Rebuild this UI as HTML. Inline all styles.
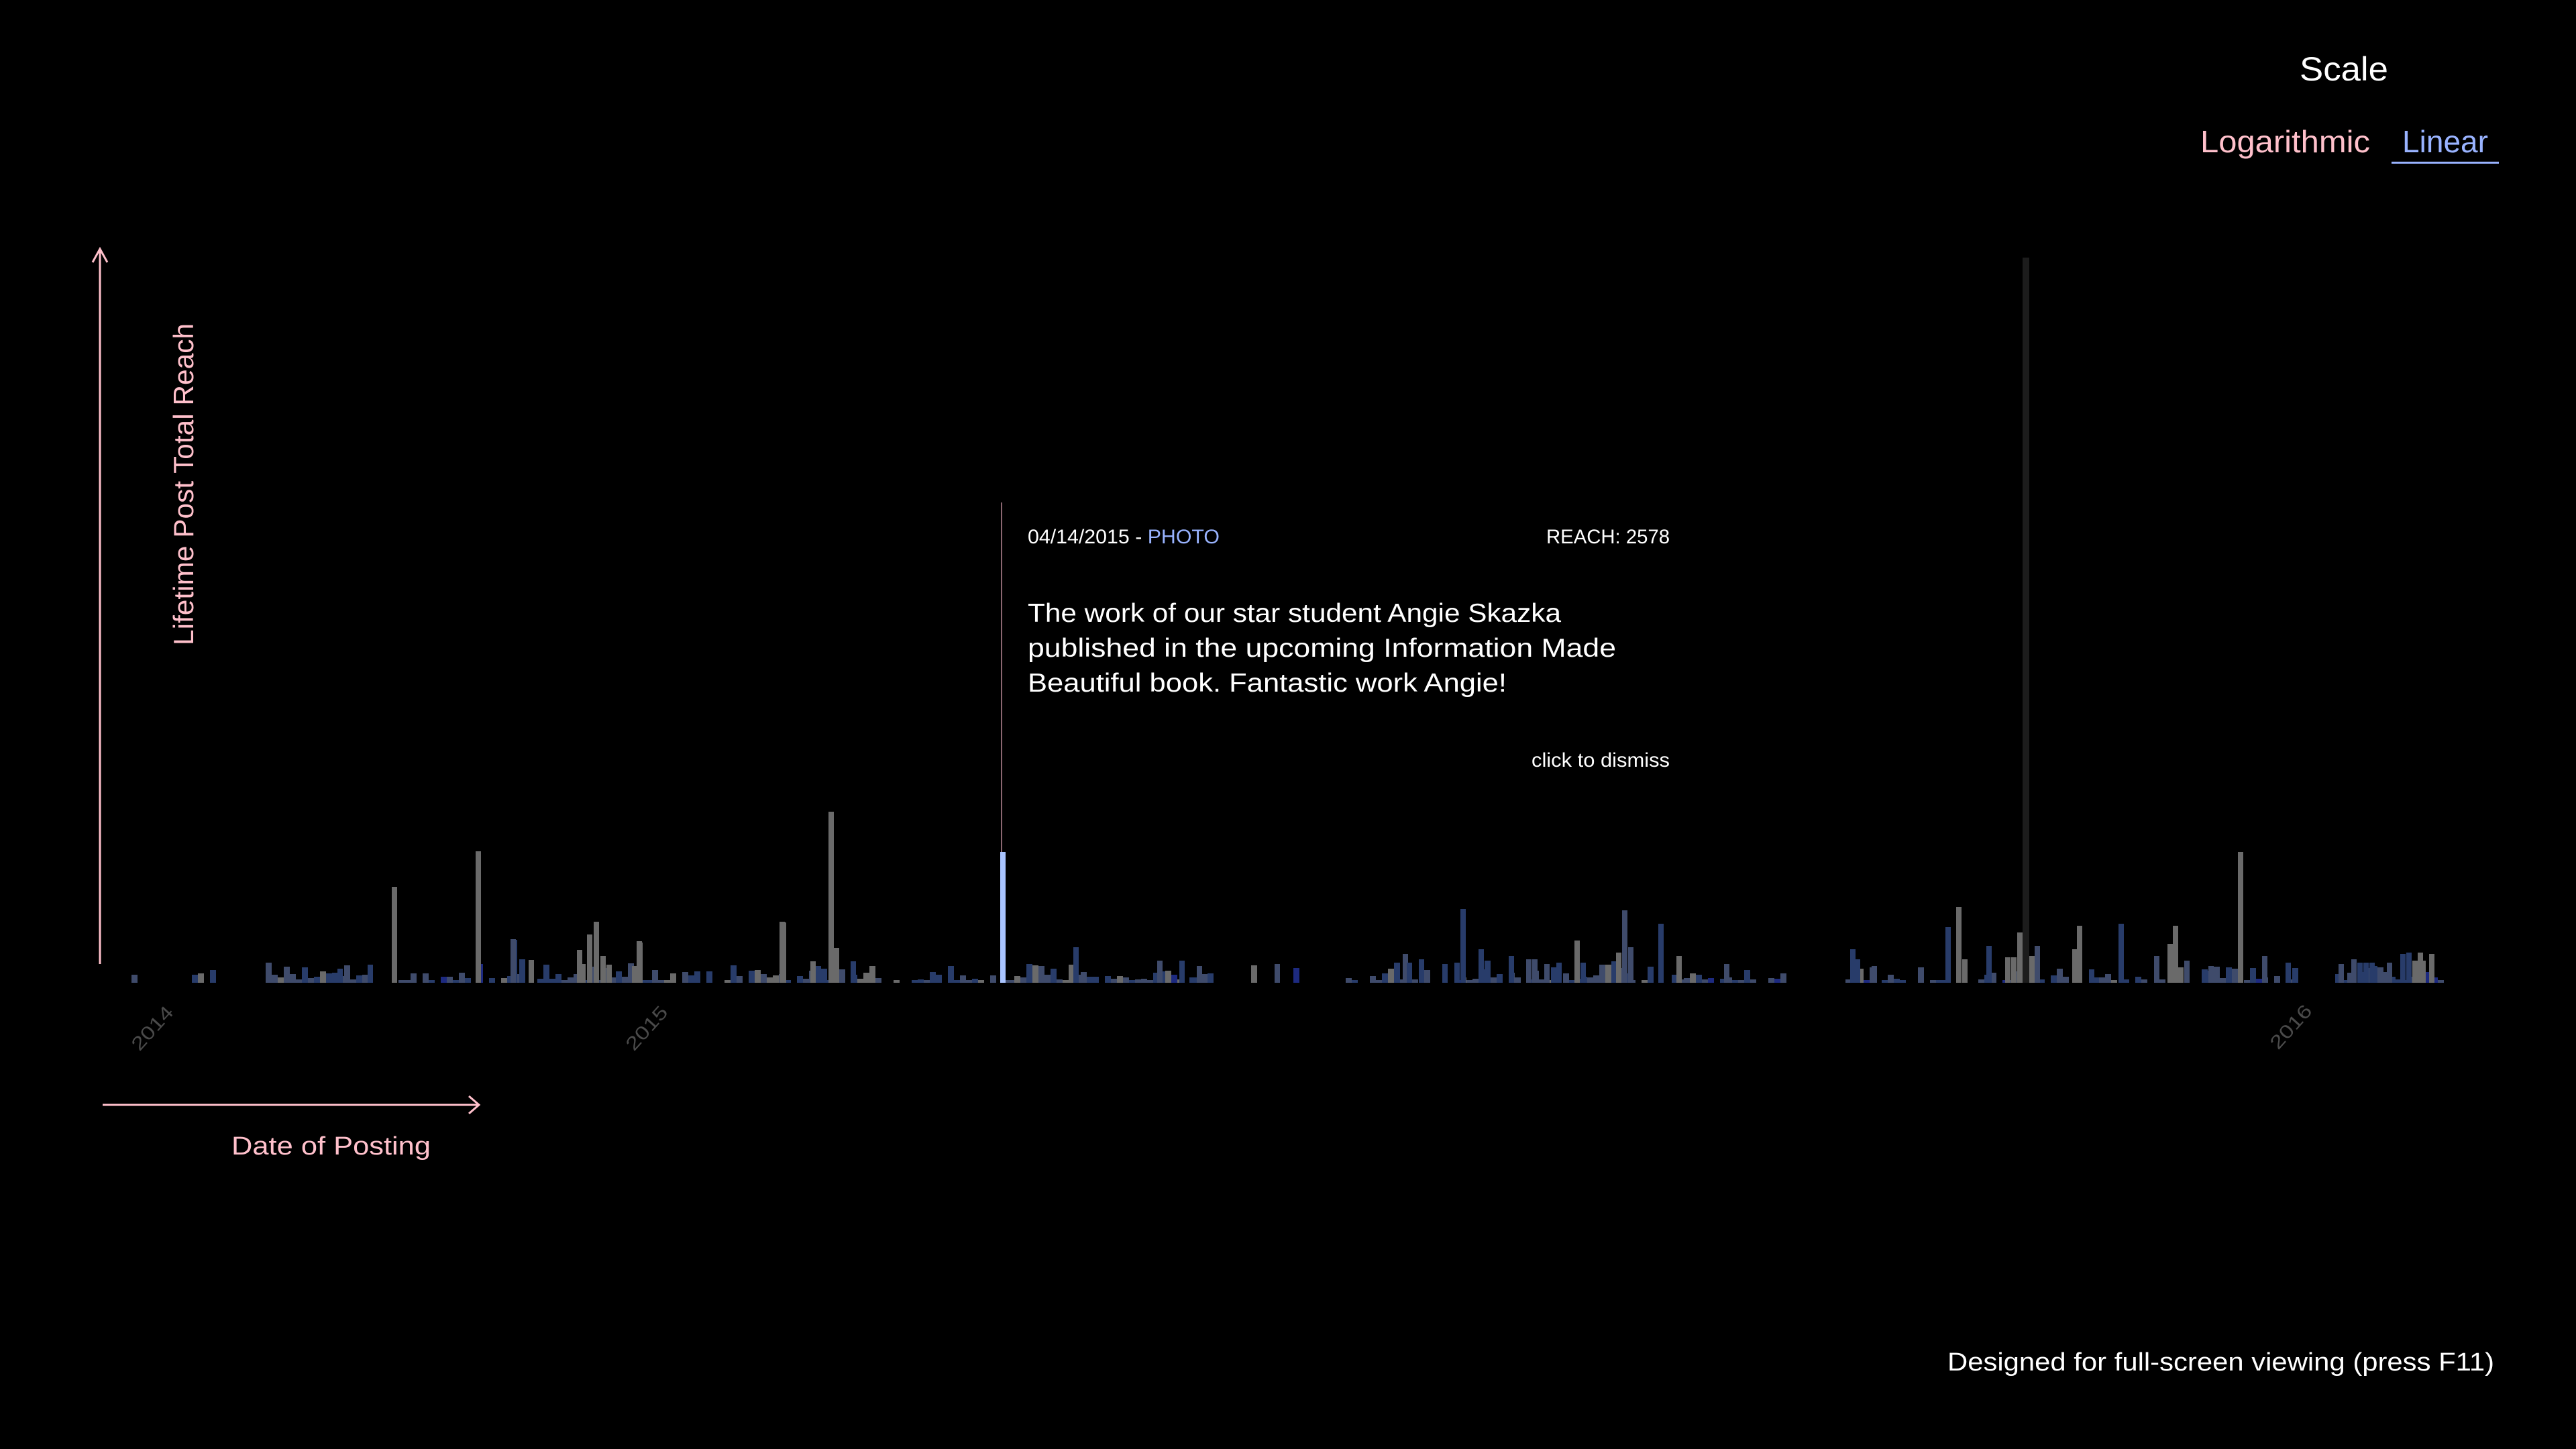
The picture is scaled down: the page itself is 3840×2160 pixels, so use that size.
<!DOCTYPE html>
<html><head><meta charset="utf-8">
<style>
html,body{margin:0;padding:0;background:#000;width:3840px;height:2160px;overflow:hidden}
svg{display:block}
text{font-family:"Liberation Sans",sans-serif}
</style></head>
<body>
<svg id="s" width="3840" height="2160" viewBox="0 0 3840 2160" xmlns="http://www.w3.org/2000/svg">
<rect width="3840" height="2160" fill="#000"/>
<g id="bars"></g>
<rect x="3015" y="384" width="10" height="1081" fill="#1c1c1c"/>
<rect x="1492" y="749" width="2" height="716" fill="#8a6670"/>
<rect x="1491" y="1270" width="8" height="195" fill="#a9c4ff"/>

<line x1="149" y1="372" x2="149" y2="1437" stroke="#ffc0cb" stroke-width="3"/>
<polyline points="138,391 149,371 160,391" fill="none" stroke="#ffc0cb" stroke-width="3"/>
<line x1="153" y1="1647" x2="713" y2="1647" stroke="#ffc0cb" stroke-width="3"/>
<polyline points="699,1634 714,1647 699,1660" fill="none" stroke="#ffc0cb" stroke-width="3"/>

<text x="0" y="0" transform="translate(288,962) rotate(-90)" font-size="42" fill="#ffc0cb" textLength="480" lengthAdjust="spacingAndGlyphs">Lifetime Post Total Reach</text>
<text x="345" y="1721" font-size="38" fill="#ffc0cb" textLength="297" lengthAdjust="spacingAndGlyphs">Date of Posting</text>

<text transform="translate(208,1568) rotate(-48)" font-size="28" fill="#4a4a4a" textLength="78" lengthAdjust="spacingAndGlyphs">2014</text>
<text transform="translate(945,1568) rotate(-48)" font-size="28" fill="#4a4a4a" textLength="78" lengthAdjust="spacingAndGlyphs">2015</text>
<text transform="translate(3396,1566) rotate(-48)" font-size="28" fill="#4a4a4a" textLength="78" lengthAdjust="spacingAndGlyphs">2016</text>

<text x="3428" y="120" font-size="50" fill="#fff" textLength="132" lengthAdjust="spacingAndGlyphs">Scale</text>
<text x="3280" y="227" font-size="46" fill="#ffc0cb" textLength="253" lengthAdjust="spacingAndGlyphs">Logarithmic</text>
<text x="3581" y="227" font-size="46" fill="#99b3ff" textLength="128" lengthAdjust="spacingAndGlyphs">Linear</text>
<rect x="3565" y="241" width="160" height="3" fill="#99b3ff"/>

<text x="1532" y="810" font-size="30" fill="#fff" textLength="286" lengthAdjust="spacingAndGlyphs">04/14/2015 - <tspan fill="#99b3ff">PHOTO</tspan></text>
<text x="2489" y="810" font-size="30" fill="#fff" text-anchor="end" textLength="184" lengthAdjust="spacingAndGlyphs">REACH: 2578</text>
<text x="1532" y="927" font-size="39" fill="#fff" textLength="795" lengthAdjust="spacingAndGlyphs">The work of our star student Angie Skazka</text>
<text x="1532" y="979" font-size="39" fill="#fff" textLength="877" lengthAdjust="spacingAndGlyphs">published in the upcoming Information Made</text>
<text x="1532" y="1031" font-size="39" fill="#fff" textLength="714" lengthAdjust="spacingAndGlyphs">Beautiful book. Fantastic work Angie!</text>
<text x="2489" y="1143" font-size="30" fill="#fff" text-anchor="end" textLength="206" lengthAdjust="spacingAndGlyphs">click to dismiss</text>

<text x="2903" y="2043" font-size="38" fill="#fff" textLength="815" lengthAdjust="spacingAndGlyphs">Designed for full-screen viewing (press F11)</text>
</svg>
<script>
(function(){
var B=1465, g=document.getElementById('bars'), NS='http://www.w3.org/2000/svg';
var C={b:'#283c6a',g:'#6a6a6a',s:'#3f4b6b',n:'#1d2a80'};
function r(x,t,c,w){var e=document.createElementNS(NS,'rect');e.setAttribute('x',x-4);e.setAttribute('y',t);e.setAttribute('width',w||9);e.setAttribute('height',B-t);e.setAttribute('fill',C[c]||c);g.appendChild(e);}
var seed=7;function rnd(){seed=(seed*16807)%2147483647;return seed/2147483647;}
var ranges=[[200,330,0.25],[400,1810,0.85],[1860,1960,0.2],[2010,2620,0.75],[2640,2700,0.2],[2755,3430,0.7],[3485,3640,0.95]];
ranges.forEach(function(rg){for(var x=rg[0];x<rg[1];x+=9){if(rnd()<rg[2]){var h=4+Math.floor(rnd()*rnd()*32);var p=rnd();var c=p<0.45?'s':(p<0.8?'b':(p<0.95?'g':'n'));r(x,B-h,c);}}});
var big=[[588,1322,'g'],[713,1269,'g'],[1239,1210,'g'],[1166,1374,'g'],[953,1403,'g'],[889,1374,'g'],[879,1393,'g'],[864,1416,'g'],[899,1425,'g'],[908,1438,'g'],[792,1431,'g'],[767,1401,'b'],[765,1400,'s'],[946,1440,'g'],[954,1405,'g'],[1247,1413,'g'],[1212,1433,'g'],[1168,1375,'g'],[552,1438,'b'],[507,1444,'b'],[1272,1433,'b'],
[2181,1355,'b'],[2422,1357,'s'],[2476,1377,'b'],[2351,1402,'g'],[2413,1420,'g'],[2431,1412,'s'],[1604,1412,'b'],[2208,1415,'b'],[2095,1422,'s'],[2253,1425,'b'],[2279,1430,'s'],[2288,1430,'s'],[2503,1425,'g'],[1904,1437,'s'],[1729,1432,'s'],[1762,1432,'b'],[1788,1440,'s'],[2101,1435,'b'],[2119,1430,'b'],[2154,1437,'b'],[2172,1435,'b'],[2306,1437,'s'],[2324,1435,'b'],[2360,1435,'b'],[2574,1437,'s'],
[2920,1352,'g'],[2929,1430,'g'],[2904,1382,'b'],[2965,1410,'b'],[2993,1427,'g'],[3002,1427,'g'],[3011,1390,'g'],[3029,1425,'g'],[3037,1410,'s'],[3093,1415,'g'],[3100,1380,'g'],[3118,1445,'b'],[3162,1377,'b'],[3215,1425,'s'],[3235,1407,'g'],[3243,1380,'g'],[3260,1432,'s'],[3296,1440,'s'],[3340,1270,'g'],[3376,1425,'s'],[3411,1435,'b'],[3490,1437,'s'],[3509,1430,'s'],[3518,1435,'b'],[3527,1435,'b'],[3536,1435,'b'],[3562,1435,'s'],[3582,1422,'b'],[3591,1420,'b'],[3600,1432,'g'],[3608,1420,'g'],[3625,1422,'g'],[2762,1415,'b'],[2769,1430,'b'],[2794,1440,'s']];
big.forEach(function(b){r(b[0],b[1],b[2],8);});
})();
</script>
</body></html>
